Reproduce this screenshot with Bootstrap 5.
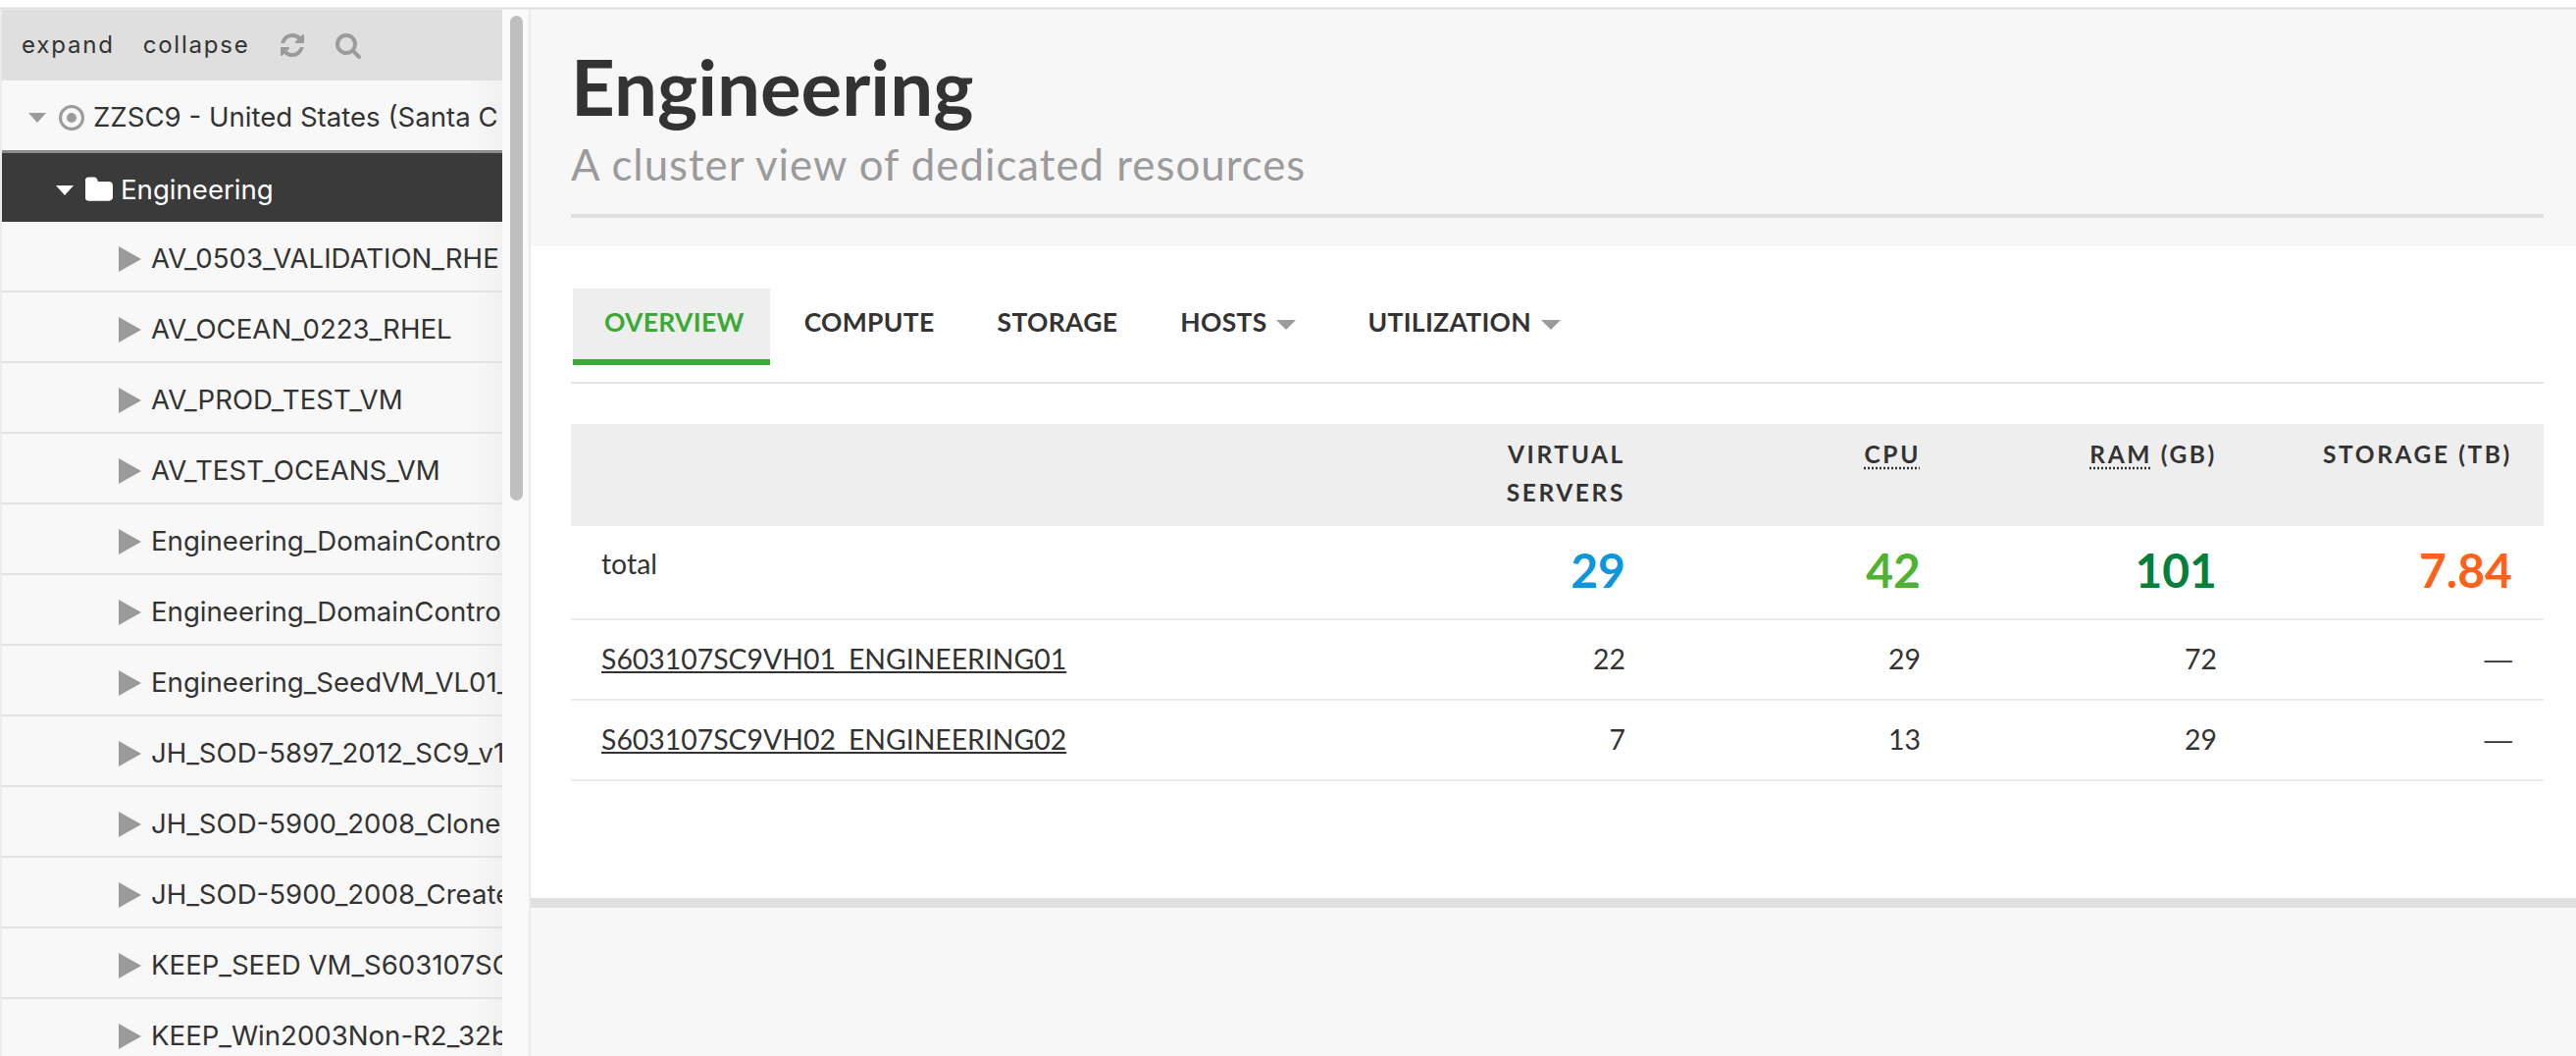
<!DOCTYPE html>
<html lang="en">
<head>
  <meta charset="UTF-8" />
  <title>Engineering</title>
  <link href="https://cdn.jsdelivr.net/npm/bootstrap@5.3.0/dist/css/bootstrap.min.css" rel="stylesheet" />
  <style>
    html, body { height: 100%; overflow: hidden; }
    body { background: #fff; color: #333; font-family: "Inter", "Liberation Sans", sans-serif; }
    .top-strip { height: 10px; background: linear-gradient(#fff 0 7px, #dcdcdc 8px, #ececec 10px); }
    .shell { height: 1066px; }
    .side-pane { width: 512px; flex: none; overflow: hidden; border-left: 2px solid #ececec; background: #f8f8f8; }
    .tree-tools { height: 72px; margin-left: -2px; padding-left: 22px; gap: 29px; background: #dfdfdf; font-size: 24px; letter-spacing: 1.8px; color: #333; }
    .tree-tools svg { fill: #9b9b9b; flex: none; }
    .tree-row { height: 72px; padding-top: 5px; border-bottom: 2px solid #e2e2e2; background: linear-gradient(90deg, #f8f8f8 93%, #f1f1f1); font-size: 27.6px; white-space: nowrap; overflow: hidden; }
    .tree-row svg { flex: none; }
    .tree-root { padding-left: 27px; border-bottom: 3px solid #8c8c8c; height: 74px; }
    .tree-sel { padding-left: 55px; background: #3a3a3a; color: #fff; border-bottom: 0; height: 70px; }
    .tree-leaf { padding-left: 119px; }
    .caret-down { flex: none; width: 0; height: 0; border-left: 9px solid transparent; border-right: 9px solid transparent; border-top: 10px solid #9b9b9b; }
    .tree-sel .caret-down { border-top-color: #fff; }
    .caret-right { flex: none; width: 0; height: 0; margin-right: 10px; border-top: 13px solid transparent; border-bottom: 13px solid transparent; border-left: 23px solid #9b9b9b; }
    .scroll-track { width: 29px; flex: none; background: #fafafa; border-right: 2px solid #ececec; padding: 6px 6px 0 8px; }
    .scroll-thumb { height: 494px; border-radius: 8px; background: #bfbfbf; }
    .main-pane { min-width: 0; font-family: "Lato", "Liberation Sans", sans-serif; }
    .page-head { height: 241px; background: #f7f7f7; padding: 34px 33px 0 41px; }
    .page-head h1 { font-size: 78px; font-weight: 700; line-height: 88px; margin: 0; color: #333; }
    .page-head p { font-size: 43.8px; line-height: 56px; margin: 7px 0 0; color: #9b9b9b; letter-spacing: 1px; }
    .head-rule { height: 4px; background: #e0e0e0; margin-top: 23px; }
    .body-pane { height: 664px; padding: 43px 33px 0 41px; }
    .view-tabs { border-bottom: 2px solid #e4e4e4; height: 97px; margin-bottom: 41px; }
    .view-tabs .nav-link { height: 78px; padding: 0 32px; line-height: 68px; font-size: 26.5px; font-weight: 700; color: #333; text-transform: uppercase; letter-spacing: .3px; }
    .view-tabs .nav-link.active { margin-left: 2px; padding-right: 26px; margin-right: 3px; background: #eee; color: #3aaa35; border-bottom: 6px solid #3aaa35; }
    .view-tabs .nav-item:last-child { margin-left: 9px; }
    .tab-caret { display: inline-block; margin-left: 10px; vertical-align: middle; border-left: 10px solid transparent; border-right: 10px solid transparent; border-top: 10px solid #9b9b9b; }
    .stats-table { margin: 0; font-size: 28.4px; table-layout: fixed; --bs-table-color: #333; }
    .stats-table th { background: #eee; padding: 11px 32px 0; height: 104px; font-size: 24.5px; line-height: 39px; font-weight: 700; letter-spacing: 2.6px; text-transform: uppercase; vertical-align: top; border: 0; }
    .stats-table td { padding: 0 32px 2px; height: 82px; vertical-align: middle; border-bottom: 2px solid #ececec; }
    .stats-table td:first-child { padding-left: 31px; }
    .stats-table .total-row td { height: 95px; vertical-align: top; padding-top: 17px; }
    .stats-table .total-row td.big-num { font-size: 48px; line-height: 50px; font-weight: 700; padding-top: 20px; }
    .stats-table a { color: #333; }
    .stats-table abbr { text-decoration: underline dotted; text-underline-offset: 4px; }
    .dash-cell { font-family: "Liberation Sans", sans-serif; }
    .num-blue { color: #0d96dc; }
    .num-lime { color: #4fb233; }
    .num-green { color: #05803c; }
    .num-orange { color: #ff6119; }
    .foot-band { height: 161px; border-top: 10px solid #e0e0e0; background: #f7f7f7; }
  </style>
</head>
<body>
  <div class="top-strip"></div>
  <div class="shell d-flex">
    <aside class="side-pane">
      <div class="tree-tools d-flex align-items-center">
        <span>expand</span>
        <span>collapse</span>
        <svg width="28" height="28" viewBox="0 0 1792 1792"><path d="M1639 1056q0 5-1 7-64 268-268 434.5t-478 166.5q-146 0-282.5-55t-243.5-157l-129 129q-19 19-45 19t-45-19-19-45v-448q0-26 19-45t45-19h448q26 0 45 19t19 45-19 45l-137 137q71 66 161 102t187 36q134 0 250-65t186-179q11-17 53-117 8-23 30-23h192q13 0 22.5 9.5t9.5 22.5zm25-800v448q0 26-19 45t-45 19h-448q-26 0-45-19t-19-45 19-45l138-138q-148-137-349-137-134 0-250 65t-186 179q-11 17-53 117-8 23-30 23h-199q-13 0-22.5-9.5t-9.5-22.5v-7q65-268 270-434.5t480-166.5q146 0 284 55.5t245 156.5l130-129q19-19 45-19t45 19 19 45z"/></svg>
        <svg width="28" height="28" viewBox="0 0 1792 1792"><path d="M1216 832q0-185-131.5-316.5t-316.5-131.5-316.5 131.5-131.5 316.5 131.5 316.5 316.5 131.5 316.5-131.5 131.5-316.5zm512 832q0 52-38 90t-90 38q-54 0-90-38l-343-342q-179 124-399 124-143 0-273.5-55.5t-225-150-150-225-55.5-273.5 55.5-273.5 150-225 225-150 273.5-55.5 273.5 55.5 225 150 150 225 55.5 273.5q0 220-124 399l343 343q37 37 37 90z"/></svg>
      </div>
      <div class="tree-row tree-root d-flex align-items-center">
        <span class="caret-down me-2"></span>
        <svg class="me-2 ms-1" width="28" height="28" viewBox="0 0 28 28"><circle cx="14" cy="14" r="11.5" fill="none" stroke="#9b9b9b" stroke-width="3"/><circle cx="14" cy="14" r="5" fill="#9b9b9b"/></svg>
        <span>ZZSC9 - United States (Santa C</span>
      </div>
      <div class="tree-row tree-sel d-flex align-items-center">
        <span class="caret-down me-2"></span>
        <svg class="me-2 ms-1" width="28" height="28" viewBox="96 96 1632 1632" fill="#fff"><path d="M1728 608v704q0 92-66 158t-158 66h-1216q-92 0-158-66t-66-158v-960q0-92 66-158t158-66h320q92 0 158 66t66 158v32h672q92 0 158 66t66 158z"/></svg>
        <span>Engineering</span>
      </div>
      <div class="tree-row tree-leaf d-flex align-items-center"><span class="caret-right"></span><span>AV_0503_VALIDATION_RHE</span></div>
      <div class="tree-row tree-leaf d-flex align-items-center"><span class="caret-right"></span><span>AV_OCEAN_0223_RHEL</span></div>
      <div class="tree-row tree-leaf d-flex align-items-center"><span class="caret-right"></span><span>AV_PROD_TEST_VM</span></div>
      <div class="tree-row tree-leaf d-flex align-items-center"><span class="caret-right"></span><span>AV_TEST_OCEANS_VM</span></div>
      <div class="tree-row tree-leaf d-flex align-items-center"><span class="caret-right"></span><span>Engineering_DomainContro</span></div>
      <div class="tree-row tree-leaf d-flex align-items-center"><span class="caret-right"></span><span>Engineering_DomainContro</span></div>
      <div class="tree-row tree-leaf d-flex align-items-center"><span class="caret-right"></span><span>Engineering_SeedVM_VL01_</span></div>
      <div class="tree-row tree-leaf d-flex align-items-center"><span class="caret-right"></span><span>JH_SOD-5897_2012_SC9_v1</span></div>
      <div class="tree-row tree-leaf d-flex align-items-center"><span class="caret-right"></span><span>JH_SOD-5900_2008_Clone</span></div>
      <div class="tree-row tree-leaf d-flex align-items-center"><span class="caret-right"></span><span>JH_SOD-5900_2008_Create</span></div>
      <div class="tree-row tree-leaf d-flex align-items-center"><span class="caret-right"></span><span>KEEP_SEED VM_S603107SC</span></div>
      <div class="tree-row tree-leaf d-flex align-items-center"><span class="caret-right"></span><span>KEEP_Win2003Non-R2_32b</span></div>
    </aside>
    <div class="scroll-track"><div class="scroll-thumb"></div></div>
    <main class="main-pane flex-grow-1">
      <header class="page-head">
        <h1>Engineering</h1>
        <p>A cluster view of dedicated resources</p>
        <div class="head-rule"></div>
      </header>
      <section class="body-pane">
        <ul class="nav view-tabs">
          <li class="nav-item"><a class="nav-link active" href="#">Overview</a></li>
          <li class="nav-item"><a class="nav-link" href="#">Compute</a></li>
          <li class="nav-item"><a class="nav-link" href="#">Storage</a></li>
          <li class="nav-item"><a class="nav-link" href="#">Hosts<span class="tab-caret"></span></a></li>
          <li class="nav-item"><a class="nav-link" href="#">Utilization<span class="tab-caret"></span></a></li>
        </ul>
        <table class="table stats-table">
          <colgroup><col /><col style="width: 230px" /><col style="width: 301px" /><col style="width: 302px" /><col style="width: 301px" /></colgroup>
          <thead>
            <tr><th></th><th class="text-end">Virtual Servers</th><th class="text-end"><abbr>CPU</abbr></th><th class="text-end"><abbr>RAM</abbr> (GB)</th><th class="text-end">Storage (TB)</th></tr>
          </thead>
          <tbody>
            <tr class="total-row"><td>total</td><td class="text-end big-num num-blue">29</td><td class="text-end big-num num-lime">42</td><td class="text-end big-num num-green">101</td><td class="text-end big-num num-orange">7.84</td></tr>
            <tr><td><a href="#">S603107SC9VH01_ENGINEERING01</a></td><td class="text-end">22</td><td class="text-end">29</td><td class="text-end">72</td><td class="text-end dash-cell">&mdash;</td></tr>
            <tr><td><a href="#">S603107SC9VH02_ENGINEERING02</a></td><td class="text-end">7</td><td class="text-end">13</td><td class="text-end">29</td><td class="text-end dash-cell">&mdash;</td></tr>
          </tbody>
        </table>
      </section>
      <div class="foot-band"></div>
    </main>
  </div>
  <script src="https://cdn.jsdelivr.net/npm/bootstrap@5.3.0/dist/js/bootstrap.bundle.min.js"></script>
</body>
</html>
